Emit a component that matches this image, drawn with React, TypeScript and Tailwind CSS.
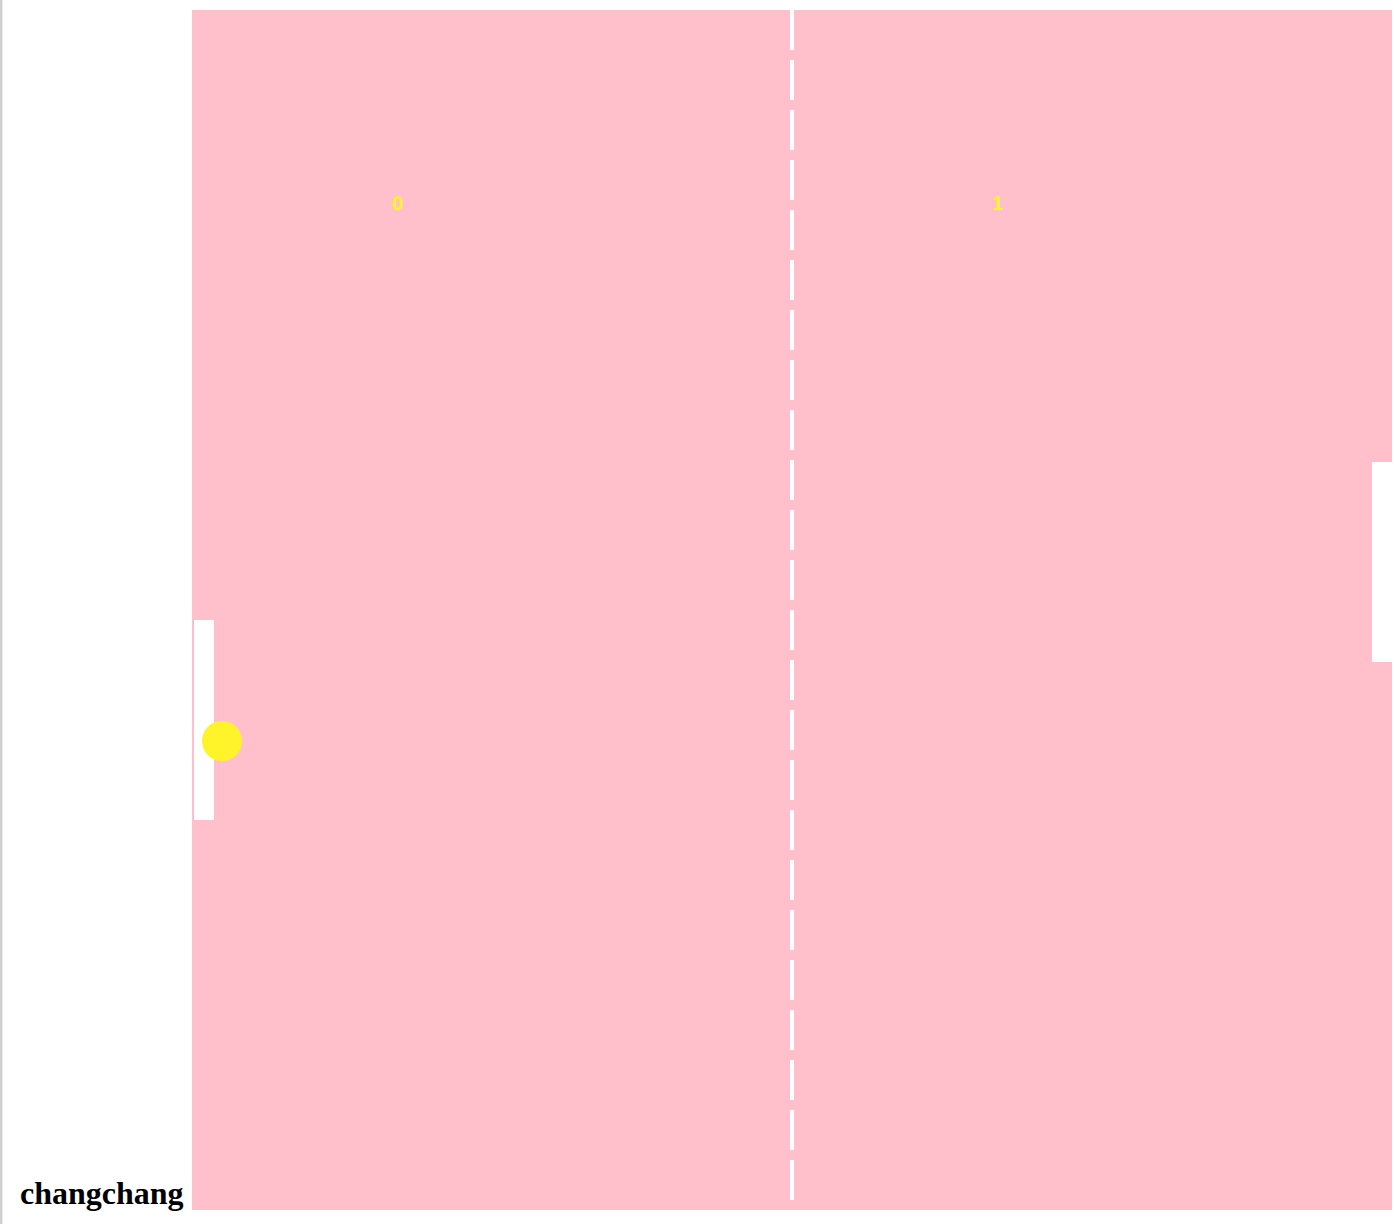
export default function App() {
  return (
    <div className="min-h-[1224px] border-l-2 border-[#d0d0d0] bg-white">
      <div className="flex min-h-[1224px] items-end border-l border-[#ebebeb] pb-[14px] pl-[17px] pt-[10px]">
        <h1 className="-mb-[2px] w-[172px] shrink-0 font-['Liberation_Serif',serif] text-[32px] font-bold leading-[normal] text-black">
          changchang
        </h1>
        <div className="relative h-[1200px] w-[1200px] shrink-0 bg-[#ffc0cb]">
          <svg className="absolute left-[598px] top-0" width="4" height="1200">
            <line x1="2" y1="0" x2="2" y2="1200" stroke="#ffffff" strokeWidth="4" strokeDasharray="40 10" />
          </svg>
          <span className="absolute left-[200px] top-[183px] font-['Liberation_Sans',sans-serif] text-[20px] font-bold leading-[20px] text-[#fff42a]">
            0
          </span>
          <span className="absolute left-[800px] top-[183px] font-['Liberation_Sans',sans-serif] text-[20px] font-bold leading-[20px] text-[#fff42a]">
            1
          </span>
          <div className="absolute left-[2px] top-[610px] h-[200px] w-[20px] bg-white" />
          <div className="absolute left-[1180px] top-[452px] h-[200px] w-[20px] bg-white" />
          <div className="absolute left-[10px] top-[711px] h-[40px] w-[40px] rounded-full bg-[#fff42a]" />
        </div>
      </div>
    </div>
  );
}
